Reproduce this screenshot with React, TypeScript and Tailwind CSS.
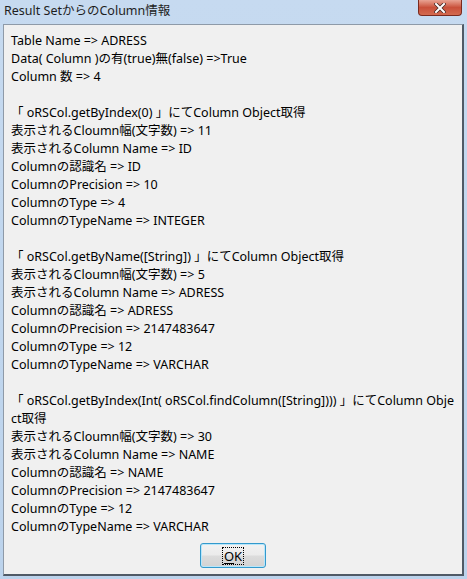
import React from "react";

const lines: string[] = [
  "Table Name => ADRESS",
  "Data( Column )の有(true)無(false) =>True",
  "Column 数 => 4",
  "",
  "「 oRSCol.getByIndex(0) 」にてColumn Object取得",
  "表示されるCloumn幅(文字数) => 11",
  "表示されるColumn Name => ID",
  "Columnの認識名 => ID",
  "ColumnのPrecision => 10",
  "ColumnのType => 4",
  "ColumnのTypeName => INTEGER",
  "",
  "「 oRSCol.getByName([String]) 」にてColumn Object取得",
  "表示されるCloumn幅(文字数) => 5",
  "表示されるColumn Name => ADRESS",
  "Columnの認識名 => ADRESS",
  "ColumnのPrecision => 2147483647",
  "ColumnのType => 12",
  "ColumnのTypeName => VARCHAR",
  "",
  "「 oRSCol.getByIndex(Int( oRSCol.findColumn([String]))) 」にてColumn Obje",
  "ct取得",
  "表示されるCloumn幅(文字数) => 30",
  "表示されるColumn Name => NAME",
  "Columnの認識名 => NAME",
  "ColumnのPrecision => 2147483647",
  "ColumnのType => 12",
  "ColumnのTypeName => VARCHAR",
];

export default function App() {
  return (
    <div
      className="w-[467px] h-[579px] flex flex-col bg-gradient-to-b from-[#c6daf0] to-[#bcd3ec] overflow-hidden"
      style={{ fontFamily: '"Noto Sans", "Noto Sans CJK JP", sans-serif' }}
    >
      <div className="h-[24px] flex items-start shrink-0">
        <div className="pl-[4px] pt-[3px] text-[12.5px] leading-[16px] text-[#1e1e1e]">
          Result SetからのColumn情報
        </div>
        <div className="ml-auto mr-[5px] w-[44px] h-[16px] rounded-b-[4px] border border-t-0 border-[#7a2a1e] bg-gradient-to-b from-[#e8a393] via-[#c9503a] to-[#d36a4f] flex items-center justify-center">
          <svg width="12" height="10" viewBox="0 0 12 10">
            <path d="M2 1 L10 9 M10 1 L2 9" stroke="#4a2a26" strokeWidth="3.6" strokeLinecap="square" />
            <path d="M2 1 L10 9 M10 1 L2 9" stroke="#ffffff" strokeWidth="2" strokeLinecap="square" />
          </svg>
        </div>
      </div>
      <div className="flex-1 mx-[3px] mb-[3px] flex flex-col bg-[#f0f0f0] border-t border-l border-t-[#8e9aa8] border-l-[#8e9aa8] border-r-2 border-b-2 border-r-[#505a66] border-b-[#505a66]">
        <div className="pl-[7px] pt-[7px] text-[12.5px] leading-[18px] text-[#000000] whitespace-pre">
          {lines.map((l, i) => (
            <div key={i} className="h-[18px]">
              {l}
            </div>
          ))}
        </div>
        <div className="flex justify-center mt-[7px]">
          <div className="w-[66px] h-[25px] rounded-[3px] border border-[#3399cc] bg-[linear-gradient(to_bottom,#f2f2f2_0%,#ebebeb_48%,#dcdcdc_52%,#d2d2d2_100%)] shadow-[inset_0_0_0_1px_#b8e6fa] flex items-center justify-center">
            <div className="border border-dotted border-[#000] px-[1px] h-[18px] leading-[16px] text-[13px] text-black">
              <span className="underline underline-offset-2">O</span>K
            </div>
          </div>
        </div>
      </div>
    </div>
  );
}
